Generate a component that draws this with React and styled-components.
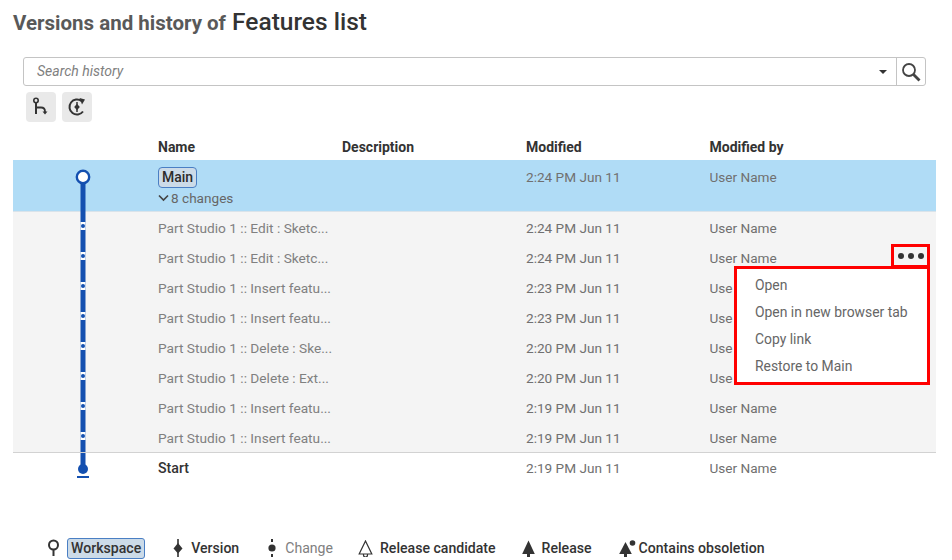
import React from 'react';
import styled, { createGlobalStyle } from 'styled-components';

const GlobalStyle = createGlobalStyle`
  html, body {
    margin: 0;
    padding: 0;
    background: #fff;
    font-family: Roboto, "Noto Sans", sans-serif;
    color: #666;
  }
  * {
    box-sizing: border-box;
  }
`;

const BLUE = '#1450b0';

const Page = styled.div`
  position: relative;
  width: 952px;
  height: 560px;
  overflow: hidden;
  padding: 8px 16px 0 13px;
`;

const Title = styled.h1`
  margin: 0;
  height: 30px;
  font-size: 20.5px;
  line-height: 28px;
  font-weight: 700;
  color: #595959;
`;

const TitleName = styled.span`
  font-size: 24.5px;
  font-weight: 500;
  color: #333;
  margin-left: 1px;
`;

const SearchBar = styled.div`
  display: flex;
  align-items: stretch;
  width: 903px;
  height: 29px;
  margin: 19px 0 0 10px;
  border: 1px solid #c4c4c4;
  border-radius: 3px;
`;

const SearchText = styled.div`
  flex: 1;
  padding-left: 13px;
  font-size: 14px;
  line-height: 27px;
  font-style: italic;
  color: #808080;
`;

const Caret = styled.div`
  width: 0;
  height: 0;
  align-self: center;
  margin-right: 9px;
  border-left: 4px solid transparent;
  border-right: 4px solid transparent;
  border-top: 4px solid #333;
`;

const SearchButton = styled.div`
  display: flex;
  align-items: center;
  justify-content: center;
  width: 29px;
  border-left: 1px solid #c4c4c4;
`;

const Tools = styled.div`
  display: flex;
  gap: 6px;
  margin: 6px 0 0 13px;
`;

const ToolButton = styled.div`
  display: flex;
  align-items: center;
  justify-content: center;
  width: 30px;
  height: 30px;
  border-radius: 4px;
  background: #e9e9e9;
`;

const Row = styled.div`
  display: grid;
  grid-template-columns: 145px 184px 184px 183.5px 1fr;
  height: ${(props) => props.$height || 30}px;
  background: ${(props) => props.$bg || 'transparent'};
  border-top: ${(props) => (props.$line ? '1px solid #d2d2d2' : '0')};
`;

const HeadRow = styled(Row)`
  margin-top: 14px;
  height: 24px;
  font-size: 14px;
  line-height: 22px;
  font-weight: 700;
  color: #333;
`;

const SelectedRow = styled(Row)`
  border-bottom: 1px solid #d9e3ea;
`;

const TrackCell = styled.div`
  padding-right: 5px;
  display: flex;
  justify-content: center;
`;

const Cell = styled.div`
  font-size: ${(props) => props.$size || 13.6}px;
  line-height: ${(props) => props.$lh || 32}px;
  color: ${(props) => props.$color || '#707070'};
  font-weight: ${(props) => props.$weight || 400};
  white-space: nowrap;
  overflow: hidden;
`;

const BranchBadge = styled.span`
  display: inline-block;
  margin-top: 7px;
  padding: 0 3px;
  height: 21px;
  font-size: 14px;
  line-height: 19px;
  font-weight: 500;
  color: #2c2c2c;
  background: #ccdbe8;
  border: 1px solid #4a7fc4;
  border-radius: 4px;
`;

const Changes = styled.div`
  display: flex;
  align-items: center;
  gap: 2px;
  height: 20px;
  font-size: 13.6px;
  color: #666;
`;

const DotsBox = styled.div`
  position: absolute;
  left: 891px;
  top: 244px;
  width: 39px;
  height: 24px;
  border: 3px solid #f00;
  display: flex;
  align-items: center;
  justify-content: center;
  gap: 4px;
`;

const Dot = styled.span`
  width: 6px;
  height: 6px;
  border-radius: 50%;
  background: #333;
`;

const Menu = styled.div`
  position: absolute;
  left: 734px;
  top: 266px;
  width: 196px;
  height: 119px;
  padding: 3px 0 0 18px;
  background: #fff;
  border: 3px solid #f00;
`;

const MenuItem = styled.div`
  height: 27px;
  font-size: 13.9px;
  line-height: 27px;
  color: #666;
`;

const Legend = styled.div`
  display: flex;
  align-items: center;
  height: 24px;
  margin-top: 54px;
  padding-left: 34px;
`;

const LegendItem = styled.div`
  display: flex;
  align-items: center;
  gap: ${(props) => props.$gap || 7}px;
  margin-right: ${(props) => props.$after || 27}px;
  font-size: 14.1px;
  font-weight: ${(props) => (props.$muted ? 400 : 500)};
  color: ${(props) => (props.$muted ? '#808080' : '#333')};
`;

const LegendBadge = styled.span`
  padding: 0 3px;
  height: 21px;
  line-height: 19px;
  background: #ccdbe8;
  border: 1px solid #4a7fc4;
  border-radius: 3px;
`;

const Track = ({ height, kind }) => {
  const mid = kind === 'main' ? 17 : 14;
  return (
    <svg width="20" height={height} viewBox={`0 0 20 ${height}`}>
      {kind === 'main' && (
        <>
          <rect x="7.5" y="17" width="5" height={height - 17} fill={BLUE} />
          <circle cx="10" cy={mid} r="6.2" fill="#fff" stroke={BLUE} strokeWidth="2.4" />
        </>
      )}
      {kind === 'change' && (
        <>
          <rect x="7.5" y="0" width="5" height={height} fill={BLUE} />
          <rect x="7.5" y={mid - 4} width="5" height="8" fill="#fff" />
          <circle cx="10" cy={mid} r="2" fill={BLUE} />
        </>
      )}
      {kind === 'start' && (
        <>
          <rect x="7.5" y="0" width="5" height="16" fill={BLUE} />
          <circle cx="10" cy="16" r="5" fill={BLUE} />
          <rect x="4" y="23" width="12" height="2" fill={BLUE} />
        </>
      )}
    </svg>
  );
};

// the last column reads "Use" where the open menu covers the rest of the name
const rows = [
  ['Part Studio 1 :: Edit : Sketc...', '2:24 PM Jun 11', 'User Name'],
  ['Part Studio 1 :: Edit : Sketc...', '2:24 PM Jun 11', 'User Name'],
  ['Part Studio 1 :: Insert featu...', '2:23 PM Jun 11', 'Use'],
  ['Part Studio 1 :: Insert featu...', '2:23 PM Jun 11', 'Use'],
  ['Part Studio 1 :: Delete : Ske...', '2:20 PM Jun 11', 'Use'],
  ['Part Studio 1 :: Delete : Ext...', '2:20 PM Jun 11', 'Use'],
  ['Part Studio 1 :: Insert featu...', '2:19 PM Jun 11', 'User Name'],
  ['Part Studio 1 :: Insert featu...', '2:19 PM Jun 11', 'User Name'],
];

const App = () => {
  return (
    <Page>
      <GlobalStyle />
      <Title>
        Versions and history of <TitleName>Features list</TitleName>
      </Title>

      <SearchBar>
        <SearchText>Search history</SearchText>
        <Caret />
        <SearchButton>
          <svg width="20" height="20" viewBox="0 0 20 20" fill="none" stroke="#444">
            <circle cx="8" cy="8" r="6" strokeWidth="1.8" />
            <path d="M12.5 12.5 L18.5 18.5" strokeWidth="2.8" />
          </svg>
        </SearchButton>
      </SearchBar>

      <Tools>
        <ToolButton>
          <svg width="18" height="20" viewBox="0 0 18 20" fill="none" stroke="#333" strokeWidth="1.6">
            <circle cx="4" cy="3.5" r="2.2" />
            <path d="M4 6 V17" strokeWidth="2" />
            <path d="M4 10.5 H9 Q13 10.5 13 14.5 V15" strokeWidth="1.8" />
            <path d="M10.5 14.5 H15.5 L13 17.5 Z" fill="#333" stroke="none" />
          </svg>
        </ToolButton>
        <ToolButton>
          <svg width="20" height="20" viewBox="0 0 20 20" fill="none" stroke="#333">
            <path d="M16 14.5 A7.5 7.5 0 1 1 14.5 4" strokeWidth="2" />
            <path d="M12.5 1 L18 2.5 L15 7.5 Z" fill="#333" stroke="none" />
            <path d="M10 5 V15" strokeWidth="1.5" />
            <path d="M10 6.8 L12.8 10 L10 13.2 L7.2 10 Z" fill="#333" stroke="none" />
          </svg>
        </ToolButton>
      </Tools>

      <HeadRow>
        <div />
        <div>Name</div>
        <div>Description</div>
        <div>Modified</div>
        <div>Modified by</div>
      </HeadRow>

      <SelectedRow $height={52} $bg="#b0dcf6">
        <TrackCell>
          <Track height={52} kind="main" />
        </TrackCell>
        <Cell $lh={20} $color="#333">
          <BranchBadge>Main</BranchBadge>
          <Changes>
            <svg width="11" height="8" viewBox="0 0 11 8" fill="none" stroke="#444" strokeWidth="1.7">
              <path d="M1 1.5 L5.5 6 L10 1.5" />
            </svg>
            8 changes
          </Changes>
        </Cell>
        <Cell />
        <Cell $lh={34}>2:24 PM Jun 11</Cell>
        <Cell $lh={34}>User Name</Cell>
      </SelectedRow>

      {rows.map(([name, time, user], i) => (
        <Row key={i} $bg="#f4f4f4">
          <TrackCell>
            <Track height={30} kind="change" />
          </TrackCell>
          <Cell $color="#808080" $size={13.7}>{name}</Cell>
          <Cell />
          <Cell>{time}</Cell>
          <Cell>{user}</Cell>
        </Row>
      ))}

      <Row $line>
        <TrackCell>
          <Track height={29} kind="start" />
        </TrackCell>
        <Cell $color="#333" $weight={500} $lh={30} $size={14.2}>Start</Cell>
        <Cell />
        <Cell $lh={30}>2:19 PM Jun 11</Cell>
        <Cell $lh={30}>User Name</Cell>
      </Row>

      <Legend>
        <LegendItem $after={28}>
          <svg width="13" height="18" viewBox="0 0 13 18" fill="none" stroke="#333" strokeWidth="2">
            <circle cx="6.5" cy="6" r="4.5" />
            <path d="M6.5 10.5 V17" />
          </svg>
          <LegendBadge>Workspace</LegendBadge>
        </LegendItem>
        <LegendItem $gap={8} $after={29}>
          <svg width="10" height="18" viewBox="0 0 10 18">
            <path d="M5 0 V18" stroke="#333" strokeWidth="1.6" />
            <path d="M5 4 L9.5 9.5 L5 14.5 L0.5 9.5 Z" fill="#333" />
          </svg>
          Version
        </LegendItem>
        <LegendItem $muted $gap={9} $after={25}>
          <svg width="8" height="18" viewBox="0 0 8 18" fill="#333">
            <rect x="3" y="0" width="2" height="3" />
            <circle cx="4" cy="9" r="3.6" />
            <rect x="3" y="15" width="2" height="3" />
          </svg>
          Change
        </LegendItem>
        <LegendItem $after={26}>
          <svg width="15" height="17" viewBox="0 0 15 17" fill="none" stroke="#333" strokeWidth="1.2">
            <path d="M7.5 1 L13.8 14 H1.2 Z" />
            <path d="M5.5 14 V15 A2 2 0 0 0 9.5 15 V14" />
          </svg>
          Release candidate
        </LegendItem>
        <LegendItem>
          <svg width="13" height="17" viewBox="0 0 13 17" fill="#333">
            <path d="M6.5 0.5 L12.8 14 H0.2 Z" />
            <rect x="5" y="13" width="3" height="4" />
          </svg>
          Release
        </LegendItem>
        <LegendItem $gap={3} $after={1}>
          <svg width="17" height="17" viewBox="0 0 17 17" fill="#333">
            <path d="M6.5 2 L12.8 14 H0.2 Z" />
            <rect x="5" y="13" width="3" height="4" />
            <circle cx="13.5" cy="3" r="2.8" />
          </svg>
          Contains obsoletion
        </LegendItem>
      </Legend>

      <DotsBox>
        <Dot />
        <Dot />
        <Dot />
      </DotsBox>
      <Menu>
        <MenuItem>Open</MenuItem>
        <MenuItem>Open in new browser tab</MenuItem>
        <MenuItem>Copy link</MenuItem>
        <MenuItem>Restore to Main</MenuItem>
      </Menu>
    </Page>
  );
};

export default App;
